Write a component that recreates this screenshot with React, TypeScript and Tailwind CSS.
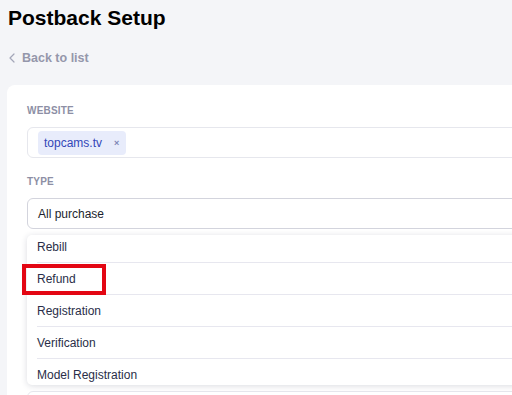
import React from "react";

const options = ["Rebill", "Refund", "Registration", "Verification", "Model Registration"];

const PostbackSetup = () => {
  return (
    <div className="h-[395px] overflow-hidden bg-[#f4f5f8] font-['Liberation_Sans',Arial,sans-serif]">
      <h1 className="pl-2 pt-[6px] text-[21px] font-bold leading-[24px] text-black">Postback Setup</h1>

      <div className="mt-[20px] flex h-4 items-center pl-[9px]">
        <svg width="6" height="10" viewBox="0 0 6 10" fill="none" className="mr-[7px]">
          <path d="M5 1L1 5l4 4" stroke="#a3a6b8" strokeWidth="1.2" strokeLinecap="round" strokeLinejoin="round" />
        </svg>
        <span className="text-[12.5px] font-bold leading-4 text-[#9497ab]">Back to list</span>
      </div>

      <div className="ml-[7px] mt-[19px] w-[560px] rounded-lg bg-white pl-5 pt-[20px] pb-10">
        <p className="text-[10px] font-bold uppercase leading-3 tracking-[0.2px] text-[#8d8fa5]">Website</p>
        <div className="mt-[10px] flex h-[31px] items-center rounded-md border border-[#e6e7ed] pl-[10px]">
          <div className="flex h-6 items-center gap-[12px] rounded-[4px] bg-[#e8ecfb] pl-[6px] pr-[7px]">
            <span className="text-[12px] leading-4 text-[#3347b8]">topcams.tv</span>
            <span className="text-[9px] font-bold leading-3 text-[#7d86b5]">×</span>
          </div>
        </div>

        <p className="mt-[18px] text-[10px] font-bold uppercase leading-3 tracking-[0.2px] text-[#8d8fa5]">Type</p>
        <div className="relative mt-[10px]">
          <div className="flex h-[31px] items-center rounded-md border border-[#d3d4dd] pl-[10px]">
            <span className="text-[12px] leading-4 text-[#1c1f2e]">All purchase</span>
          </div>

          <div className="absolute left-0 right-0 top-[37px] z-10 h-[150px] overflow-hidden rounded-[5px] bg-white shadow-[0_1px_6px_rgba(30,35,70,0.16)]">
            <div className="-mt-[4px]">
              {options.map((option, i) => (
                <div
                  key={option}
                  className={`ml-[10px] flex h-8 items-center text-[12px] text-[#2a2e48] ${
                    i < options.length - 1 ? "border-b border-[#e7e7ef]" : ""
                  }`}
                >
                  {option}
                </div>
              ))}
            </div>
          </div>

          <div className="absolute left-[-5px] top-[66px] z-20 h-[31px] w-[84px] border-[4px] border-[#e30613]" />

          <div className="mt-[162px] h-[31px] rounded-md border border-[#e6e7ed]" />
        </div>
      </div>
    </div>
  );
};

export default function App() {
  return <PostbackSetup />;
}
